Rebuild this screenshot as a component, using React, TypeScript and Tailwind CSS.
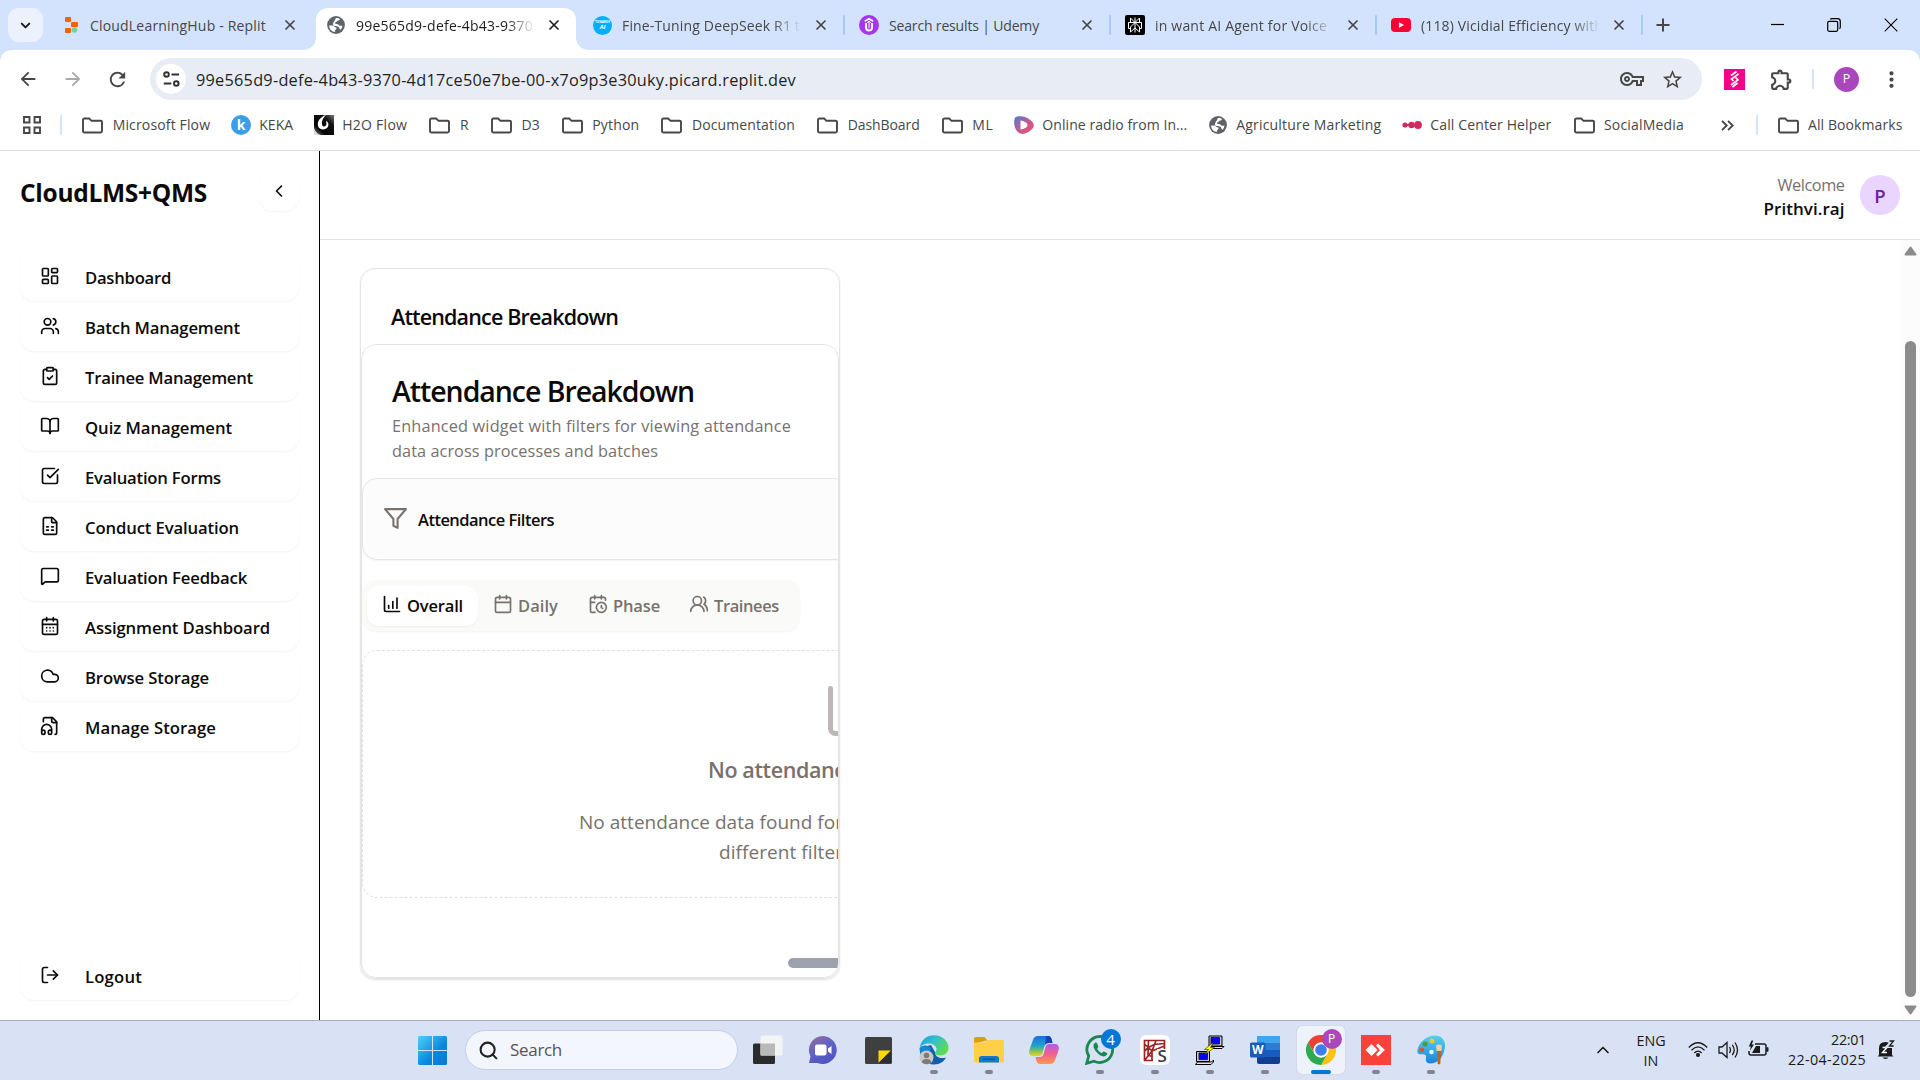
import React, { useLayoutEffect, useRef, useState } from "react";
import {
  LayoutDashboard,
  Users,
  ClipboardCheck,
  BookOpen,
  SquareCheckBig,
  FileSpreadsheet,
  MessageSquare,
  CalendarDays,
  Cloud,
  LogOut,
  ChevronLeft,
  ChevronDown,
  ChevronUp,
  ChartColumnIncreasing,
  Calendar,
  CalendarClock,
  UsersRound,
  X,
  Search,
} from "lucide-react";
import {
  MdArrowBack,
  MdArrowForward,
  MdRefresh,
  MdStarOutline,
  MdOutlineVpnKey,
  MdOutlineExtension,
  MdMoreVert,
} from "react-icons/md";

/* Single line of text whose letter spacing is tuned so it spans `w` pixels. */
function Fit({ w, children, className = "" }: { w: number; children: string; className?: string }) {
  const ref = useRef<HTMLSpanElement>(null);
  const [spacing, setSpacing] = useState(0);
  useLayoutEffect(() => {
    if (!ref.current) return;
    setSpacing((w - ref.current.getBoundingClientRect().width) / children.length);
  }, [w, children]);
  return (
    <span ref={ref} className={"inline-block whitespace-pre " + className} style={{ letterSpacing: spacing + "px" }}>
      {children}
    </span>
  );
}

/* ---------- small drawings ---------- */

const Globe = ({ size = 18 }: { size?: number }) => (
  <svg width={size} height={size} viewBox="0 0 18 18" className="shrink-0">
    <circle cx="9" cy="9" r="8.9" fill="#5f6368" />
    <path d="M2.200 9.500h3.600c1.500 0 1.200 1.800 2.600 1.800 1.700 0 1.400 1.700.2 2.400-.9.6-.6 2-.2 2.300C4.500 16 1.900 12.500 2.200 9.500z" fill="#fff" />
    <path d="M8.700 2c1.300-.3 3.200 0 4.500 1.200C12.500 4.800 10.500 4.200 10 5.300 9.600 6.400 7.900 6 8 7.200c.1 1 2.900.3 3.500 1.500.5 1 1.900 1.200 3.900.7-.1 1.700-.8 3.200-1.900 4.300-1.600-.4-.9-2.600-2.400-3.200-1.300-.5-4.400.2-5-1.800C5.500 6.500 8.600 4.400 8.700 2z" fill="#fff" />
  </svg>
);

const Folder = () => (
  <svg width="21" height="17" viewBox="0 0 21 17" fill="none" stroke="#474747" strokeWidth="1.900" className="shrink-0">
    <path d="M1 14V3Q1 1.500 2.500 1.500h4.700l2.300 2.300h8.800Q20 3.800 20 5.300V14q0 1.500-1.500 1.500h-16Q1 15.500 1 14z" />
  </svg>
);

const ReplitLogo = () => (
  <svg width="14" height="18" viewBox="0 0 14 18" className="shrink-0">
    <rect x="1" y="1" width="6" height="5" rx="1" fill="#f26207" />
    <rect x="7" y="6" width="7" height="5" rx="1" fill="#f26207" />
    <rect x="1" y="12" width="6" height="5" rx="1" fill="#f26207" />
    <circle cx="10.500" cy="14" r="2.800" fill="#68d991" />
  </svg>
);

const TowardsLogo = () => (
  <span className="flex size-[19px] shrink-0 flex-col items-center justify-center rounded-full bg-[#00aeff] font-bold leading-none text-white">
    <span className="text-[3px]">TOWARDS</span>
    <span className="text-[6px] italic">AI</span>
  </span>
);

const UdemyLogo = () => (
  <svg width="20" height="20" viewBox="0 0 20 20" className="shrink-0">
    <circle cx="10" cy="10" r="10" fill="#a435f0" />
    <path d="M5.800 6.300 10 3.800l4.200 2.500M7 8v4.500a3 3 0 0 0 6 0V8" fill="none" stroke="#fff" strokeWidth="1.900" />
    <path d="M10 6.200v7M8.200 7.800 10 6.200l1.800 1.600" fill="none" stroke="#fff" strokeWidth="1" />
  </svg>
);

const PerplexityLogo = () => (
  <svg width="20" height="20" viewBox="0 0 20 20" className="shrink-0">
    <rect width="20" height="20" rx="2" fill="#000" />
    <path d="M10 2.500v15M5.500 3l4.500 4.500L14.500 3v4.500h-9zM3.500 7.500h13M3.500 7.500v6h2M16.500 7.500v6h-2M10 7.500l-4.500 4.500v5L10 13l4.500 4v-5L10 7.500" fill="none" stroke="#fff" strokeWidth="1" />
  </svg>
);

const YoutubeLogo = () => (
  <svg width="20" height="14" viewBox="0 0 20 14" className="shrink-0">
    <rect width="20" height="14" rx="4" fill="#ff0033" />
    <path d="M8 4.200 13 7l-5 2.800z" fill="#fff" />
  </svg>
);

const H2OLogo = () => (
  <svg width="20" height="20" viewBox="0 0 20 20" className="shrink-0">
    <defs>
      <linearGradient id="h2o" x1="0" y1="1" x2="1" y2="0">
        <stop offset="0" stopColor="#777" />
        <stop offset="0.300" stopColor="#050505" />
        <stop offset="0.700" stopColor="#111" />
        <stop offset="1" stopColor="#777" />
      </linearGradient>
    </defs>
    <rect width="20" height="20" fill="url(#h2o)" />
    <path d="M12 0C6 2 3 6.500 4 11c1 3.500 6 4.500 9 2 2.500-2.500 1.500-6.500-1-7 1 2.500.5 5-1.500 5.500C7 12 6.500 5 12 0z" fill="#fff" />
    <path d="M0 13c1.500 4 4 6.500 7 7H0z" fill="#ddd" />
  </svg>
);

const RadioLogo = () => (
  <svg width="20" height="20" viewBox="0 -1 20 20" className="shrink-0">
    <defs>
      <linearGradient id="radio" x1="0" y1="0" x2="1" y2="1">
        <stop offset="0" stopColor="#4b7fd6" />
        <stop offset="0.600" stopColor="#d0588a" />
        <stop offset="1" stopColor="#f0506a" />
      </linearGradient>
    </defs>
    <path d="M3 .5C8-.5 14 1 18 5.500c3 3.500 2 6-1 8.500-3 3-8 5-11.500 3.200C1.500 15.500-.5 9 .3 4 .6 2 1.500.8 3 .500z" fill="url(#radio)" />
    <path d="M6.500 4.500q7 1.500 7 4.500t-7 4.500z" fill="#fff" />
  </svg>
);

const CallLogo = () => (
  <svg width="20" height="8" viewBox="0 0 20 8" className="shrink-0">
    <rect x="2" y="3" width="15" height="2" fill="#d02a60" />
    <circle cx="3" cy="4" r="2.600" fill="#d02a60" />
    <circle cx="9.500" cy="4" r="3.200" fill="#d02a60" />
    <circle cx="16" cy="4" r="3.900" fill="#d02a60" />
  </svg>
);

const FileHeadphones = () => (
  <svg width="20" height="20" viewBox="0 0 24 24" fill="none" stroke="currentColor" strokeWidth="2" strokeLinecap="round" strokeLinejoin="round">
    <path d="M4 7V4a2 2 0 0 1 2-2h9l5 5v13a2 2 0 0 1-2 2" />
    <path d="M14 2v4a2 2 0 0 0 2 2h4" />
    <path d="M2 19a2 2 0 1 1 4 0v1a2 2 0 1 1-4 0v-4a6 6 0 0 1 12 0v4a2 2 0 1 1-4 0v-1a2 2 0 1 1 4 0" />
  </svg>
);

/* ---------- browser frame ---------- */

type TabData = { icon: React.ReactNode; title: string; w: number; slot: string; fade?: boolean; active?: boolean; sep?: boolean };

const tabs: TabData[] = [
  { icon: <ReplitLogo />, title: "CloudLearningHub - Replit", w: 176, slot: "w-[266px] pl-[14px] pr-[4px] [&_.lead]:w-[26px]" },
  { icon: <Globe />, title: "99e565d9-defe-4b43-9370", w: 177, slot: "w-[260px] pl-[11px] [&_.lead]:w-[29px]", fade: true, active: true },
  { icon: <TowardsLogo />, title: "Fine-Tuning DeepSeek R1 t", w: 178, slot: "w-[270px] pl-[17px] pr-[1px] [&_.lead]:w-[29px]", fade: true, sep: true },
  { icon: <UdemyLogo />, title: "Search results | Udemy", w: 150, slot: "w-[266px] pl-[13px] pr-[1px] [&_.lead]:w-[30px]", sep: true },
  { icon: <PerplexityLogo />, title: "in want AI Agent for Voice", w: 172, slot: "w-[266px] pl-[13px] pr-[1px] [&_.lead]:w-[30px]", fade: true, sep: true },
  { icon: <YoutubeLogo />, title: "(118) Vicidial Efficiency with", w: 182, slot: "w-[265px] pl-[13px] [&_.lead]:w-[30px]", fade: true, sep: true },
];

function TabStrip() {
  return (
    <div className="flex h-[50px] bg-[#d3e3fd] pl-2">
      <div className="mt-2 flex h-[34px] w-[35px] items-center justify-center rounded-[11px] bg-[#ebf1fd]">
        <ChevronDown size={15} strokeWidth={3.2} color="#1f1f1f" />
      </div>
      <div className="flex pl-[7px]">
        {tabs.map((t) => (
          <div
            key={t.title}
            className={
              "relative mt-2 flex h-[42px] items-center pb-[8px] " +
              t.slot +
              (t.active ? " rounded-t-[12px] bg-white" : "")
            }
          >
            {t.active && (
              <>
                <span className="absolute bottom-0 -left-3 size-3 bg-[radial-gradient(circle_at_0_0,#d3e3fd_11.5px,#fff_12px)]" />
                <span className="absolute bottom-0 -right-3 size-3 bg-[radial-gradient(circle_at_100%_0,#d3e3fd_11.5px,#fff_12px)]" />
              </>
            )}
            <span className="lead flex shrink-0 items-center">{t.icon}</span>
            <span
              className={
                "w-[179px] shrink-0 overflow-hidden pt-px text-[14px] leading-[22px] " +
                (t.active ? "text-[#1f1f1f] " : "text-[#474747] ") +
                (t.fade ? "[mask-image:linear-gradient(to_right,#000_84%,transparent_100%)]" : "")
              }
            >
              <Fit w={t.w}>{t.title}</Fit>
            </span>
            <X size={16} strokeWidth={2.6} color={t.active ? "#1f1f1f" : "#474747"} className="ml-auto mr-[14px] shrink-0" />
            {t.sep && <span className="h-5 w-[2px] shrink-0 rounded bg-[#a8c7fa]" />}
          </div>
        ))}
      </div>
      <svg width="14" height="14" viewBox="0 0 14 14" className="mt-[18px] ml-[13px]" stroke="#474747" strokeWidth="2">
        <path d="M7 .5v13M.5 7h13" />
      </svg>
      <div className="mt-[17px] mr-[22px] ml-auto flex h-4 items-center gap-[43px]">
        <svg width="13" height="14" viewBox="0 0 13 14" stroke="#000" strokeWidth="1.200"><path d="M0 6.500h13" /></svg>
        <svg width="14" height="14" viewBox="0 0 14 14" fill="none" stroke="#000" strokeWidth="1.200">
          <rect x=".7" y="3.300" width="10" height="10" rx="1.500" />
          <path d="M3.300 1.300Q3.800.7 5 .7h5.500q2.800 0 2.800 2.800V9q0 1.200-.8 1.700" />
        </svg>
        <svg width="14" height="14" viewBox="0 0 14 14" stroke="#000" strokeWidth="1.100"><path d="M.7.7l12.600 12.600M13.300.7.7 13.300" /></svg>
      </div>
    </div>
  );
}

function AddressBar() {
  return (
    <div className="bg-[#d3e3fd]">
      <div className="flex h-[58px] items-center rounded-t-[12px] bg-white pl-[17px]">
        <MdArrowBack size={22} color="#474747" />
        <MdArrowForward size={22} color="#a9a9a9" className="ml-[23px]" />
        <MdRefresh size={23} color="#474747" className="ml-[22px]" />
        <div className="ml-[21px] flex h-[42px] w-[1552px] items-center rounded-full bg-[#e8ecf5] pl-[6px]">
          <span className="flex size-[30px] items-center justify-center rounded-full bg-white">
            <svg width="17" height="16" viewBox="0 0 17 16" fill="none" stroke="#303030" strokeWidth="1.900">
              <circle cx="3.500" cy="3.500" r="2.300" />
              <circle cx="13.300" cy="12.500" r="2.300" />
              <path d="M8.500 3.500H16M.8 12.500h7.500" />
            </svg>
          </span>
          <span className="ml-[10px] pt-px text-[16.300px] leading-[24px] text-[#1f1f1f]">
            <Fit w={600}>99e565d9-defe-4b43-9370-4d17ce50e7be-00-x7o9p3e30uky.picard.replit.dev</Fit>
          </span>
          <MdOutlineVpnKey size={24} color="#474747" className="mr-[17px] ml-auto" />
          <MdStarOutline size={23} color="#474747" className="mr-[18px]" />
        </div>
        <svg width="21" height="21" viewBox="0 0 21 21" className="ml-[22px]">
          <rect width="21" height="21" fill="#f5008b" />
          <path d="M12.500 2.500 7 6.500M14.500 5 7.500 10l2 2M11.500 8.500l2.500 2.500-7 5M13.500 14 8.500 18" fill="none" stroke="#fff" strokeWidth="1.700" />
        </svg>
        <MdOutlineExtension size={25} color="#474747" className="ml-[24px]" />
        <span className="ml-[18px] h-5 w-[2px] rounded bg-[#d3e3fd]" />
        <span className="ml-[20px] flex size-[25px] items-center justify-center rounded-full bg-[#ab47bc] text-[12.500px] text-white">P</span>
        <MdMoreVert size={25} color="#474747" className="ml-[20px]" />
      </div>
    </div>
  );
}

const bookmarks: [React.ReactNode | null, string, number][] = [
  [null, "Microsoft Flow", 97.5],
  [<span className="flex size-[20px] shrink-0 items-center justify-center rounded-full bg-[#3a9ee4] text-[14px] font-bold leading-none text-white">k</span>, "KEKA", 34],
  [<H2OLogo />, "H2O Flow", 65],
  [null, "R", 9],
  [null, "D3", 18],
  [null, "Python", 47],
  [null, "Documentation", 103],
  [null, "DashBoard", 72],
  [null, "ML", 21],
  [<RadioLogo />, "Online radio from In...", 145],
  [<span className="flex w-5 justify-center"><Globe /></span>, "Agriculture Marketing", 145],
  [<CallLogo />, "Call Center Helper", 121],
  [null, "SocialMedia", 80],
];

function Bookmarks() {
  return (
    <div className="flex h-[43px] items-center border-b border-[#dedede] bg-white pb-[8px] pl-[23px] text-[14px] leading-[22px] text-[#474747]">
      <svg width="18" height="18" viewBox="0 0 18 18" fill="none" stroke="#474747" strokeWidth="1.900">
        <path d="M1 1h5.500v5.500H1zM11.500 1H17v5.500h-5.500zM1 11.500h5.500V17H1zM11.500 11.500H17V17h-5.500z" />
      </svg>
      <span className="mr-[19px] ml-[19px] h-5 w-[2px] rounded bg-[#d3e3fd]" />
      <div className="flex items-center gap-[21px]">
        {bookmarks.map(([icon, label, w]) => (
          <span key={label} className={"flex items-center " + (icon ? "gap-[8px]" : "gap-[9.500px] pl-[1.200px]")}>
            {icon ?? <Folder />}
            <Fit w={w}>{label}</Fit>
          </span>
        ))}
      </div>
      <svg width="13" height="11" viewBox="0 0 13 11" fill="none" stroke="#474747" strokeWidth="1.900" className="ml-auto">
        <path d="m1 .8 4.700 4.700L1 10.200M7 .8l4.700 4.700L7 10.200" />
      </svg>
      <span className="mr-[20px] ml-[22px] h-5 w-[2px] rounded bg-[#d3e3fd]" />
      <span className="mr-[17.500px] flex items-center gap-[9.500px]">
        <Folder />
        <Fit w={94.5}>All Bookmarks</Fit>
      </span>
    </div>
  );
}

/* ---------- application ---------- */

const nav: [React.ReactNode, string, number][] = [
  [<LayoutDashboard size={20} />, "Dashboard", 86],
  [<Users size={20} />, "Batch Management", 155],
  [<ClipboardCheck size={20} />, "Trainee Management", 168],
  [<BookOpen size={20} />, "Quiz Management", 147],
  [<SquareCheckBig size={20} />, "Evaluation Forms", 136],
  [<FileSpreadsheet size={20} />, "Conduct Evaluation", 154],
  [<MessageSquare size={20} />, "Evaluation Feedback", 162],
  [<CalendarDays size={20} />, "Assignment Dashboard", 185],
  [<Cloud size={20} />, "Browse Storage", 124],
  [<FileHeadphones />, "Manage Storage", 131],
];

function NavItem({ icon, label, w }: { icon: React.ReactNode; label: string; w: number }) {
  return (
    <div className="flex h-[50px] items-center rounded-[14px] pl-[20px] shadow-[0_1px_2px_rgba(0,0,0,0.05)]">
      {icon}
      <span className="ml-[25px] pt-[2px] text-[16.700px] font-[560] leading-[25px]">
        <Fit w={w}>{label}</Fit>
      </span>
    </div>
  );
}

function Sidebar() {
  return (
    <aside className="flex w-[320px] shrink-0 flex-col border-r border-black px-5 text-[#0c0a09]">
      <div className="flex h-[100px] justify-between pt-[20px]">
        <span className="text-[24.500px] font-[680] leading-[44px]">
          <Fit w={187}>CloudLMS+QMS</Fit>
        </span>
        <span className="flex size-10 items-center justify-center rounded-[14px] shadow-[0_1px_2px_rgba(0,0,0,0.05)]">
          <ChevronLeft size={20} />
        </span>
      </div>
      {nav.map(([icon, label, w]) => (
        <NavItem key={label} icon={icon} label={label} w={w} />
      ))}
      <div className="mt-auto pb-[20px]">
        <NavItem icon={<LogOut size={20} />} label="Logout" w={57} />
      </div>
    </aside>
  );
}

function AttendanceCard() {
  return (
    <section className="h-[711px] w-[480px] overflow-hidden rounded-[15px] border border-[#e5e5e5] text-[#0c0a09] shadow-[0_1px_2px_rgba(0,0,0,0.12)]">
      <div className="h-[75px] pt-[31px] pl-[30px] text-[21.500px] font-[560] leading-[34px]">
        <Fit w={227}>Attendance Breakdown</Fit>
      </div>
      <div className="h-[634px] overflow-hidden rounded-[15px] border border-[#e5e5e5]">
        <div className="h-[133px] pt-[26px] pl-[30px]">
          <div className="text-[28.500px] font-[560] leading-[40px]">
            <Fit w={302}>Attendance Breakdown</Fit>
          </div>
          <div className="mt-[3px] text-[16.300px] leading-[25px] text-[#78716c]">
            <div><Fit w={399}>Enhanced widget with filters for viewing attendance</Fit></div>
            <div><Fit w={266}>data across processes and batches</Fit></div>
          </div>
        </div>
        <div className="flex h-[82px] w-[982px] items-center rounded-[15px] border border-[#e5e5e5] bg-[#fcfcfc] pl-[20px] shadow-[0_1px_2px_rgba(0,0,0,0.05)]">
          <svg width="25" height="25" viewBox="0 0 24 24" fill="none" stroke="#78716c" strokeWidth="2" strokeLinecap="round" strokeLinejoin="round" className="mb-[2px]">
            <path d="M22 3H2l8 9.460V19l4 2v-8.540z" />
          </svg>
          <span className="ml-[10px] pt-px text-[16.500px] font-[560] leading-[25px]">
            <Fit w={136}>Attendance Filters</Fit>
          </span>
        </div>
        <div className="mt-[20px] flex h-[51px] w-[438px] items-center rounded-[14px] bg-[#fafaf9] pl-[5px] text-[16.500px] font-[560] leading-[24px] text-[#78716c] shadow-[0_1px_2px_rgba(0,0,0,0.05)]">
          <span className="flex h-10 w-[111px] items-center rounded-[12px] bg-white pl-[15px] text-[#0c0a09] shadow-[0_1px_2px_rgba(0,0,0,0.05)]">
            <ChartColumnIncreasing size={20} className="mr-[5px] mb-[3px]" />
            <Fit w={56} className="pt-px">Overall</Fit>
          </span>
          <Calendar size={20} className="mr-[5px] mb-[3px] ml-[15px]" />
          <Fit w={40} className="pt-px">Daily</Fit>
          <CalendarClock size={20} className="mr-[5px] mb-[3px] ml-[30px]" />
          <Fit w={47} className="pt-px">Phase</Fit>
          <UsersRound size={20} className="mr-[5px] mb-[3px] ml-[29px]" />
          <Fit w={65} className="pt-px">Trainees</Fit>
        </div>
        <div className="mt-[19px] h-[248px] w-[982px] rounded-[15px] border border-dashed border-[#e0e0e0] pt-[30px] text-[#78716c]">
          <ChartColumnIncreasing size={60} className="ml-[460px] opacity-50" />
          <div className="mt-[11px] pl-[345px] text-[21.500px] font-[560] leading-[35px]">
            <Fit w={199}>No attendance data</Fit>
          </div>
          <div className="mt-[20px] text-[19px] leading-[30px]">
            <div className="whitespace-nowrap pl-[216px]">
              <Fit w={264}>No attendance data found for</Fit> the selected filters. Try
            </div>
            <div className="whitespace-nowrap pl-[356px]">
              <Fit w={124}>different filter</Fit>s.
            </div>
          </div>
        </div>
        <div className="mt-[60px] ml-[426px] h-[10px] w-[120px] rounded-full bg-[#9ca3af]" />
      </div>
    </section>
  );
}

function Scrollbar() {
  return (
    <div className="flex w-[19px] shrink-0 flex-col items-center bg-[#fcfcfc] pt-[6px]">
      <svg width="13" height="10" viewBox="0 0 13 10"><path d="M6.500 1.500 11.500 8.500h-10z" fill="#8b8b8b" stroke="#8b8b8b" strokeWidth="2" strokeLinejoin="round" /></svg>
      <div className="mt-[85px] h-[656px] w-[11px] rounded-full bg-[#8b8b8b]" />
      <svg width="13" height="10" viewBox="0 0 13 10" className="mt-[8px]"><path d="M6.500 8.500 11.500 1.500h-10z" fill="#8b8b8b" stroke="#8b8b8b" strokeWidth="2" strokeLinejoin="round" /></svg>
    </div>
  );
}

function Main() {
  return (
    <div className="flex min-w-0 flex-1 flex-col">
      <header className="flex h-[89px] items-center justify-end border-b border-[#e5e5e5] pr-5">
        <div className="mr-[15.500px] flex flex-col items-end pt-[2px]">
          <span className="text-[16.300px] leading-[24px] text-[#78716c]"><Fit w={67}>Welcome</Fit></span>
          <span className="text-[17px] font-[560] leading-[23px] text-[#0c0a09]"><Fit w={81}>Prithvi.raj</Fit></span>
        </div>
        <span className="flex size-10 items-center justify-center rounded-full bg-[#e9d5ff] pt-px text-[18.500px] font-[560] text-[#6b21a8]">P</span>
      </header>
      <div className="flex flex-1">
        <div className="flex-1 pt-[28px] pl-[40px]">
          <AttendanceCard />
        </div>
        <Scrollbar />
      </div>
    </div>
  );
}

/* ---------- taskbar ---------- */

const TaskView = () => (
  <svg width="30" height="30" viewBox="0 0 30 30">
    <rect y="8.500" width="22" height="20.500" rx="1.500" fill="#2b2b2b" />
    <rect x="7.500" y=".500" width="22" height="20" rx="1.500" fill="#f4f4f4" />
    <rect x="7.500" y="8.500" width="14.500" height="12" fill="#b9b9b9" />
  </svg>
);

const ChatIcon = () => (
  <svg width="30" height="30" viewBox="0 0 30 30">
    <defs>
      <linearGradient id="chat" x1="0" y1="0" x2="0.600" y2="1">
        <stop offset="0" stopColor="#a06a94" /><stop offset=".5" stopColor="#6264c7" /><stop offset="1" stopColor="#5052c0" />
      </linearGradient>
    </defs>
    <path d="M15 1a14 14 0 1 1-5.500 27H1l1.500-6.500A14 14 0 0 1 15 1z" fill="url(#chat)" />
    <rect x="7" y="9.500" width="11.500" height="11" rx="2" fill="#fff" />
    <path d="m20 13.500 3.500-2.500v8L20 16.500z" fill="#fff" />
  </svg>
);

const StickyIcon = () => (
  <svg width="27" height="27" viewBox="0 0 27 27">
    <rect width="27" height="27" rx="1.500" fill="#3f3f3f" />
    <path d="M13.500 13.500H26L13.500 26z" fill="#ffd800" />
    <path d="M13.500 26 26 13.500V26z" fill="#2e2e2e" />
  </svg>
);

const EdgeIcon = () => (
  <svg width="30" height="30" viewBox="0 0 30 30">
    <defs>
      <linearGradient id="edgeA" x1="0" y1="0" x2="1" y2=".6">
        <stop offset="0" stopColor="#1b9de2" /><stop offset=".5" stopColor="#35c1c9" /><stop offset="1" stopColor="#5fdc4e" />
      </linearGradient>
    </defs>
    <path d="M.7 13C.5 22 6 29.500 15 29.500c6 0 10-3 12-7-4 1.500-11 .5-11-5.500L12 10z" fill="#0f5fb0" />
    <path d="M.7 13C2 4.500 8 .3 15 .3c8.500 0 14.500 6 14.500 12.500 0 5-3.700 7.700-8 7.700-3.500 0-5.500-1.200-5.500-2.500 0-1 1.500-1.500 1.500-4 0-3-3.500-5.500-7.500-5.500-4 0-7.800 1.500-9.300 4.500z" fill="url(#edgeA)" />
    <path d="M.7 13c3-4 10.300-3 11.300 1-2 4-1 9 3 13-6 1-14.300-4-14.300-14z" fill="#1783d3" />
    <circle cx="7.500" cy="22.500" r="7" fill="#c9c6c3" />
    <circle cx="7.500" cy="20.500" r="2.700" fill="#7d7a78" />
    <path d="M2.800 27.500q0-3.500 4.700-3.500t4.700 3.500q-4.700 3.500-9.400 0z" fill="#7d7a78" />
  </svg>
);

const ExplorerIcon = () => (
  <svg width="30" height="28" viewBox="0 0 30 28">
    <path d="M0 2.500Q0 1 1.500 1h9l3 3.500H12L0 8z" fill="#e19c0a" />
    <path d="M0 6.500h10L14 4h14.500Q30 4 30 5.500v19q0 2-2 2H2q-2 0-2-2z" fill="#ffcf48" />
    <path d="M5 26.500v-4q0-2.500 2.500-2.500h15q2.500 0 2.500 2.500v4z" fill="#0f7bcb" />
    <rect x="9" y="22.500" width="12" height="1.300" rx=".6" fill="#0a4f8f" />
  </svg>
);

const CopilotIcon = () => (
  <svg width="30" height="28" viewBox="0 0 30 28">
    <defs>
      <linearGradient id="cpA" x1="0" y1="0" x2="0" y2="1">
        <stop offset="0" stopColor="#1a6fe0" /><stop offset=".5" stopColor="#23a3c8" /><stop offset=".75" stopColor="#7cc45c" /><stop offset="1" stopColor="#f2d21b" />
      </linearGradient>
      <linearGradient id="cpB" x1="0" y1="0" x2="0" y2="1">
        <stop offset="0" stopColor="#b55be8" /><stop offset=".5" stopColor="#f0608e" /><stop offset="1" stopColor="#ff9a4a" />
      </linearGradient>
    </defs>
    <path d="M9 0h10c2 0 3 1 3.500 3l1 4h-4c-2.500 0-3.500 1-4 3l-2 7c-.6 2-1.500 3-3.500 3H4c-3.500 0-4.500-3-3.500-6.500L4 4C5 1 6.500 0 9 0z" fill="url(#cpA)" />
    <path d="M21 28H11c-2 0-3-1-3.500-3l-1-4h4c2.500 0 3.500-1 4-3l2-7c.6-2 1.500-3 3.500-3h6c3.500 0 4.500 3 3.500 6.500L26 24c-1 3-2.500 4-5 4z" fill="url(#cpB)" />
    <path d="M17 0h2c2 0 3 1 3.500 3l1 4h-4q-2.500 0-3.500 2z" fill="#1743b8" />
  </svg>
);

const WhatsappIcon = () => (
  <svg width="30" height="30" viewBox="0 0 30 30">
    <path d="M15.500 1.500A13 13 0 1 1 9 26.200L1.700 28.300 3.700 21A13 13 0 0 1 15.500 1.500z" fill="none" stroke="#198754" strokeWidth="2.800" />
    <path d="M10.500 7.500c-3 1.500-2.500 5 .5 9 3.500 4.300 7.500 6 9.800 4.300 1.700-1.200 1.800-2.300 1.200-2.700l-3-1.600c-1-.4-1.500 1.500-2.300 1.500-1.200-.2-3.700-2.500-4.400-4-.3-.7 1.400-1.500 1-2.500l-1.300-3.300c-.3-.7-.8-.9-1.500-.7z" fill="#198754" />
  </svg>
);

const SpyderIcon = () => (
  <span className="relative flex size-[30px] items-center justify-center rounded-[6px] bg-white">
    <svg width="23" height="23" viewBox="0 0 23 23" fill="none" stroke="#9c2424" strokeWidth="1.700">
      <path d="M21.500 10V1.500h-20v20H10M9 12 1.500 21.500M9 12 1.500 5M9 12 13 1.500M9 12l12.500-5M9 12v9M5.500 1.500 5 16l5 2M1.500 12l4-3.500L11 5.500l10.500-1" />
    </svg>
    <span className="absolute right-[3px] bottom-[2px] bg-white pl-px text-[17px] font-semibold leading-[14px] text-[#3a3a3a]">S</span>
  </span>
);

const PuttyIcon = () => (
  <svg width="30" height="30" viewBox="0 0 30 30" stroke="#000" strokeWidth="1">
    <path d="M14 1h13v10H14zM1.500 16.500h13v10h-13z" fill="#c8c8c8" />
    <path d="M16 2.500h8.500v6.500H16zM4 18h8.500v6.500H4z" fill="#0000ff" stroke="#222" />
    <path d="m12 13.500 2-2h15l-2 2zM.5 29.500l2-2.500h14l2-2v2l-2.500 2.500z" fill="#e6e6e6" />
    <path d="m18.500 7-9 7.500h4L9.500 20l10-7.500h-4z" fill="#ffff00" strokeWidth=".5" />
  </svg>
);

const WordIcon = () => (
  <span className="relative block h-[28px] w-[30px]">
    <svg width="30" height="28" viewBox="0 0 30 28">
      <rect x="7" width="23" height="28" rx="2" fill="#103f91" />
      <path d="M7 7h23V2q0-2-2-2H9Q7 0 7 2z" fill="#41a5ee" />
      <path d="M7 7h23v7H7z" fill="#2b7cd3" />
      <path d="M7 14h23v7H7z" fill="#185abd" />
      <rect y="6.500" width="15.500" height="15" rx="1.500" fill="#185abd" />
    </svg>
    <span className="absolute top-[6px] left-0 w-[15px] text-center text-[12px] font-bold leading-[15px] text-white">W</span>
  </span>
);

const ChromeIcon = () => (
  <svg width="30" height="30" viewBox="0 0 30 30">
    <circle cx="15" cy="15" r="15" fill="#fff" />
    <path d="M2 7.500A15 15 0 0 1 28 7.500H15A7.500 7.500 0 0 0 8.500 18.700z" fill="#ea4335" />
    <path d="M28 7.500A15 15 0 0 1 15 30l6.500-11.300A7.500 7.500 0 0 0 15 7.500z" fill="#fbc116" />
    <path d="M15 30A15 15 0 0 1 2 7.500l6.500 11.200A7.500 7.500 0 0 0 21.500 18.700z" fill="#2da94f" />
    <circle cx="15" cy="15" r="7.400" fill="#fff" />
    <circle cx="15" cy="15" r="5.800" fill="#3b7ded" />
  </svg>
);

const AnyDeskIcon = () => (
  <svg width="30" height="30" viewBox="0 0 30 30">
    <rect width="30" height="30" fill="#f9423a" />
    <path d="m4.500 15 6-6 6 6-6 6zM15 10.500l2-2L24 15l-7 6.500-2-2 4-4.500z" fill="#fff" />
  </svg>
);

const PaintIcon = () => (
  <svg width="29" height="30" viewBox="0 0 29 30">
    <defs>
      <linearGradient id="pnt" x1="0" y1="0" x2="0" y2="1"><stop offset="0" stopColor="#56d0f5" /><stop offset="1" stopColor="#1685d8" /></linearGradient>
    </defs>
    <path d="M18 .5c6 0 10 4 10 10S24 28 14 28.500c-5 .3-5.500-3-5-6 .5-2.500-1-3.500-4-3.300C1 19.500 0 18 .5 15 1.500 8 9 .5 18 .500z" fill="url(#pnt)" />
    <circle cx="8" cy="9" r="2.500" fill="#4f9c3a" /><circle cx="15" cy="6" r="2.500" fill="#ffc81e" />
    <circle cx="4.800" cy="15" r="2.400" fill="#d8562a" /><circle cx="14.500" cy="17" r="2.300" fill="#e4f4fc" />
    <path d="M19 10.500q3-2 6 0l-.5 5.500h-5z" fill="#f0cf9d" />
    <path d="M20 16h4l-.6 12.500q-1.400 2-2.800 0z" fill="#b8662a" />
  </svg>
);

const apps: { icon: React.ReactNode; dot?: boolean; active?: boolean; badge?: React.ReactNode }[] = [
  { icon: <TaskView /> },
  { icon: <ChatIcon /> },
  { icon: <StickyIcon /> },
  { icon: <EdgeIcon />, dot: true },
  { icon: <ExplorerIcon />, dot: true },
  { icon: <CopilotIcon /> },
  { icon: <WhatsappIcon />, dot: true, badge: <span className="absolute top-[3px] left-[25px] flex size-5 items-center justify-center rounded-full bg-[#0078d7] text-[15px] text-white">4</span> },
  { icon: <SpyderIcon />, dot: true },
  { icon: <PuttyIcon />, dot: true },
  { icon: <WordIcon />, dot: true },
  { icon: <ChromeIcon />, active: true, badge: <span className="absolute top-[3px] left-[25px] flex size-5 items-center justify-center rounded-full bg-[#ab47bc] text-[12px] text-white">P</span> },
  { icon: <AnyDeskIcon />, dot: true },
  { icon: <PaintIcon />, dot: true },
];

function Taskbar() {
  return (
    <footer className="flex h-[60px] border-t border-[#aab0bb] bg-[#d8e2f4]">
      <svg width="29" height="29" viewBox="0 0 29 29" className="mt-[15px] ml-[418px]">
        <defs>
          <linearGradient id="win" x1="0" y1="0" x2="1" y2="1"><stop offset="0" stopColor="#4fd0fb" /><stop offset=".6" stopColor="#0a86dc" /><stop offset="1" stopColor="#0a78d4" /></linearGradient>
        </defs>
        <path d="M1 0h13v14H0V1zM15 0h13l1 1v13H15zM0 15h14v14H1l-1-1zM15 15h14v13l-1 1H15z" fill="url(#win)" />
      </svg>
      <div className="mt-[9px] ml-[18px] flex h-[40px] w-[273px] items-center rounded-full border border-[#c5cfe6] bg-[#f3f6fc] pl-[12px] text-[17px] text-[#555]">
        <Search size={21} strokeWidth={2.4} color="#222" />
        <span className="ml-[11px] leading-[24px]"><Fit w={52}>Search</Fit></span>
      </div>
      <div className="ml-[2.500px] flex">
        {apps.map((a, i) => (
          <div key={i} className="flex w-[55.250px] justify-center pt-[5px]">
            <div className={"relative flex h-[48px] w-[48px] flex-col items-center rounded-[5px] " + (a.active ? "bg-[#eef3fb] shadow-[0_0_1px_rgba(0,0,0,0.25)]" : "")}>
              <div className="flex h-[46px] items-center pt-[2px]">{a.icon}</div>
              {a.badge}
              {a.dot && <span className="absolute bottom-0 h-[4px] w-[8px] rounded-full bg-[#7f8490]" />}
              {a.active && <span className="absolute bottom-0 h-[4px] w-[20px] rounded-full bg-[#0078d4]" />}
            </div>
          </div>
        ))}
      </div>
      <div className="ml-auto flex pt-[8px] text-[14.300px] leading-[20px] text-[#1b1b1b]">
        <ChevronUp size={20} strokeWidth={2} className="mt-[11px] mr-[23px]" />
        <span className="flex w-[30px] flex-col items-center pt-[2px]"><Fit w={29}>ENG</Fit><Fit w={15}>IN</Fit></span>
        <svg width="20" height="17" viewBox="0 0 20 17" fill="none" stroke="#1b1b1b" strokeWidth="1.300" className="mt-[12px] ml-[22px]">
          <path d="M.8 6.500q9.200-9.500 18.400 0M3.500 9.300q6.500-6.700 13 0M6.300 12q3.700-3.800 7.400 0" /><circle cx="10" cy="14" r="1.400" fill="#1b1b1b" />
        </svg>
        <svg width="21" height="18" viewBox="0 0 21 18" fill="none" stroke="#1b1b1b" strokeWidth="1.300" className="mt-[12px] ml-[10px]">
          <path d="M1 6h3l5-4.500v15L4 12H1zM11.500 6q2 3 0 6M14.300 3.800q3.800 5.200 0 10.400M17 1.500q5 7.500 0 15" />
        </svg>
        <svg width="21" height="17" viewBox="0 0 21 17" fill="none" stroke="#1b1b1b" strokeWidth="1.500" className="mt-[11px] ml-[9px]">
          <path d="M7 4h9q2 0 2 2v7q0 2-2 2H3q-2 0-2-2v-2" /><path d="M4 13l4-7h4v7zM18.500 7.500h1.500v4h-1.500zM3.500.5.800 6.500h2l-.8 4 4-6H3.800l1.400-4z" fill="#1b1b1b" stroke="none" />
          <path d="M19.500 7.500v4" strokeWidth="2" />
        </svg>
        <span className="ml-[18px] flex w-[79px] flex-col items-end pt-px"><Fit w={35}>22:01</Fit><Fit w={78}>22-04-2025</Fit></span>
        <svg width="18" height="20" viewBox="0 0 18 20" className="mt-[11px] mr-[25px] ml-[11px]">
          <path d="M2 15V8q0-6 6.500-6T15 8v7l1.500 1.500H.5zM5.500 17.500h6q-3 3-6 0z" fill="#1b1b1b" />
          <path d="M5.500 7.500h4.500l-4.500 5H10" fill="none" stroke="#fff" strokeWidth="1.400" />
          <path d="M11.500 1h4.800l-4.800 5h5" fill="none" stroke="#d8e2f4" strokeWidth="4" /><path d="M12.500 1h4l-4 5h4.200" fill="none" stroke="#1b1b1b" strokeWidth="1.300" />
        </svg>
      </div>
    </footer>
  );
}

export default function App() {
  return (
    <div className="flex h-[1080px] w-[1920px] flex-col overflow-hidden bg-white font-['Open_Sans','Noto_Sans',sans-serif]">
      <TabStrip />
      <AddressBar />
      <Bookmarks />
      <div className="flex h-[869px] shrink-0">
        <Sidebar />
        <Main />
      </div>
      <Taskbar />
    </div>
  );
}
